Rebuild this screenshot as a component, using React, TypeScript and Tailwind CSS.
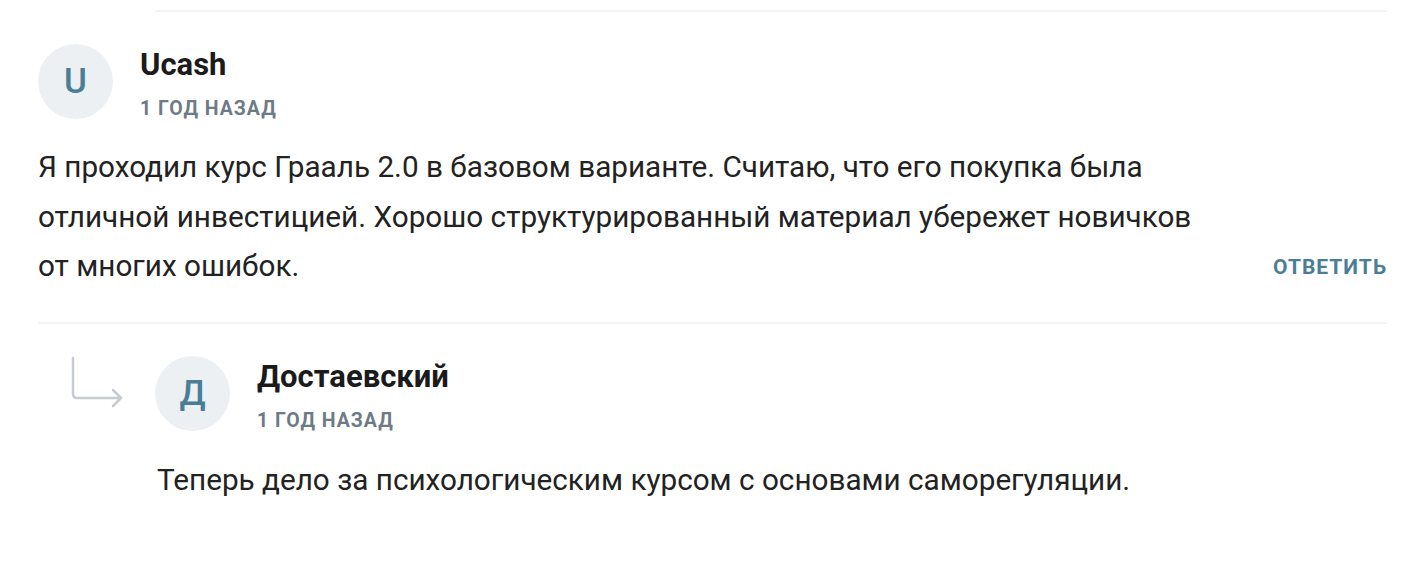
import React from 'react';

interface Comment {
  author: string;
  initial: string;
  time: string;
  text: string[];
}

const main: Comment = {
  author: 'Ucash',
  initial: 'U',
  time: '1 год назад',
  text: [
    'Я проходил курс Грааль 2.0 в базовом варианте. Считаю, что его покупка была',
    'отличной инвестицией. Хорошо структурированный материал убережет новичков',
    'от многих ошибок.',
  ],
};

const reply: Comment = {
  author: 'Достаевский',
  initial: 'Д',
  time: '1 год назад',
  text: ['Теперь дело за психологическим курсом с основами саморегуляции.'],
};

function Avatar({ letter }: { letter: string }) {
  return (
    <div className="w-[75px] h-[75px] shrink-0 rounded-full bg-[#edf0f3] flex items-center justify-center text-[35px] font-medium text-[#4a7e97] leading-none">
      {letter}
    </div>
  );
}

function Header({ c }: { c: Comment }) {
  return (
    <div className="flex items-start">
      <Avatar letter={c.initial} />
      <div className="ml-[27px] pt-[3px]">
        <div className="text-[31px] leading-[36px] font-bold text-[#1b1b1b]">{c.author}</div>
        <div className="mt-[14px] text-[19.5px] leading-[24px] font-bold uppercase tracking-[1px] text-[#6d7b86]">
          {c.time}
        </div>
      </div>
    </div>
  );
}

function ReplyArrow() {
  return (
    <svg width="56" height="52" viewBox="0 0 56 52" fill="none" stroke="#c6ccd1" strokeWidth="2.5" strokeLinecap="round" strokeLinejoin="round">
      <path d="M5 2 V38 Q5 42 9 42 H53" />
      <path d="M45 34 L53 42 L45 50" />
    </svg>
  );
}

export default function App() {
  return (
    <div className="w-[1425px] h-[579px] bg-white overflow-hidden" style={{ fontFamily: 'Roboto, "Liberation Sans", sans-serif' }}>
      <div className="px-[38px] pt-[10px]">
        <div className="ml-[117px] h-[2px] bg-[#f3f4f5]" />

        <div className="mt-[32px]">
          <Header c={main} />
          <div className="mt-[21px] flex items-end justify-between">
            <p className="text-[29.7px] leading-[49.5px] text-[#222]">
              {main.text.map((line) => (
                <span key={line} className="block">{line}</span>
              ))}
            </p>
            <button className="text-[21px] leading-[49.5px] font-bold uppercase tracking-[1px] text-[#4a7e97] translate-y-[2px]">
              Ответить
            </button>
          </div>
        </div>

        <div className="mt-[31px] h-[2px] bg-[#f3f4f5]" />

        <div className="mt-[32px]">
          <div className="flex items-start">
            <div className="w-[117px] shrink-0 pl-[30px]">
              <ReplyArrow />
            </div>
            <Header c={reply} />
          </div>
          <p className="mt-[22px] pl-[119px] text-[29.7px] leading-[49.5px] text-[#222]">
            {reply.text[0]}
          </p>
        </div>
      </div>
    </div>
  );
}
